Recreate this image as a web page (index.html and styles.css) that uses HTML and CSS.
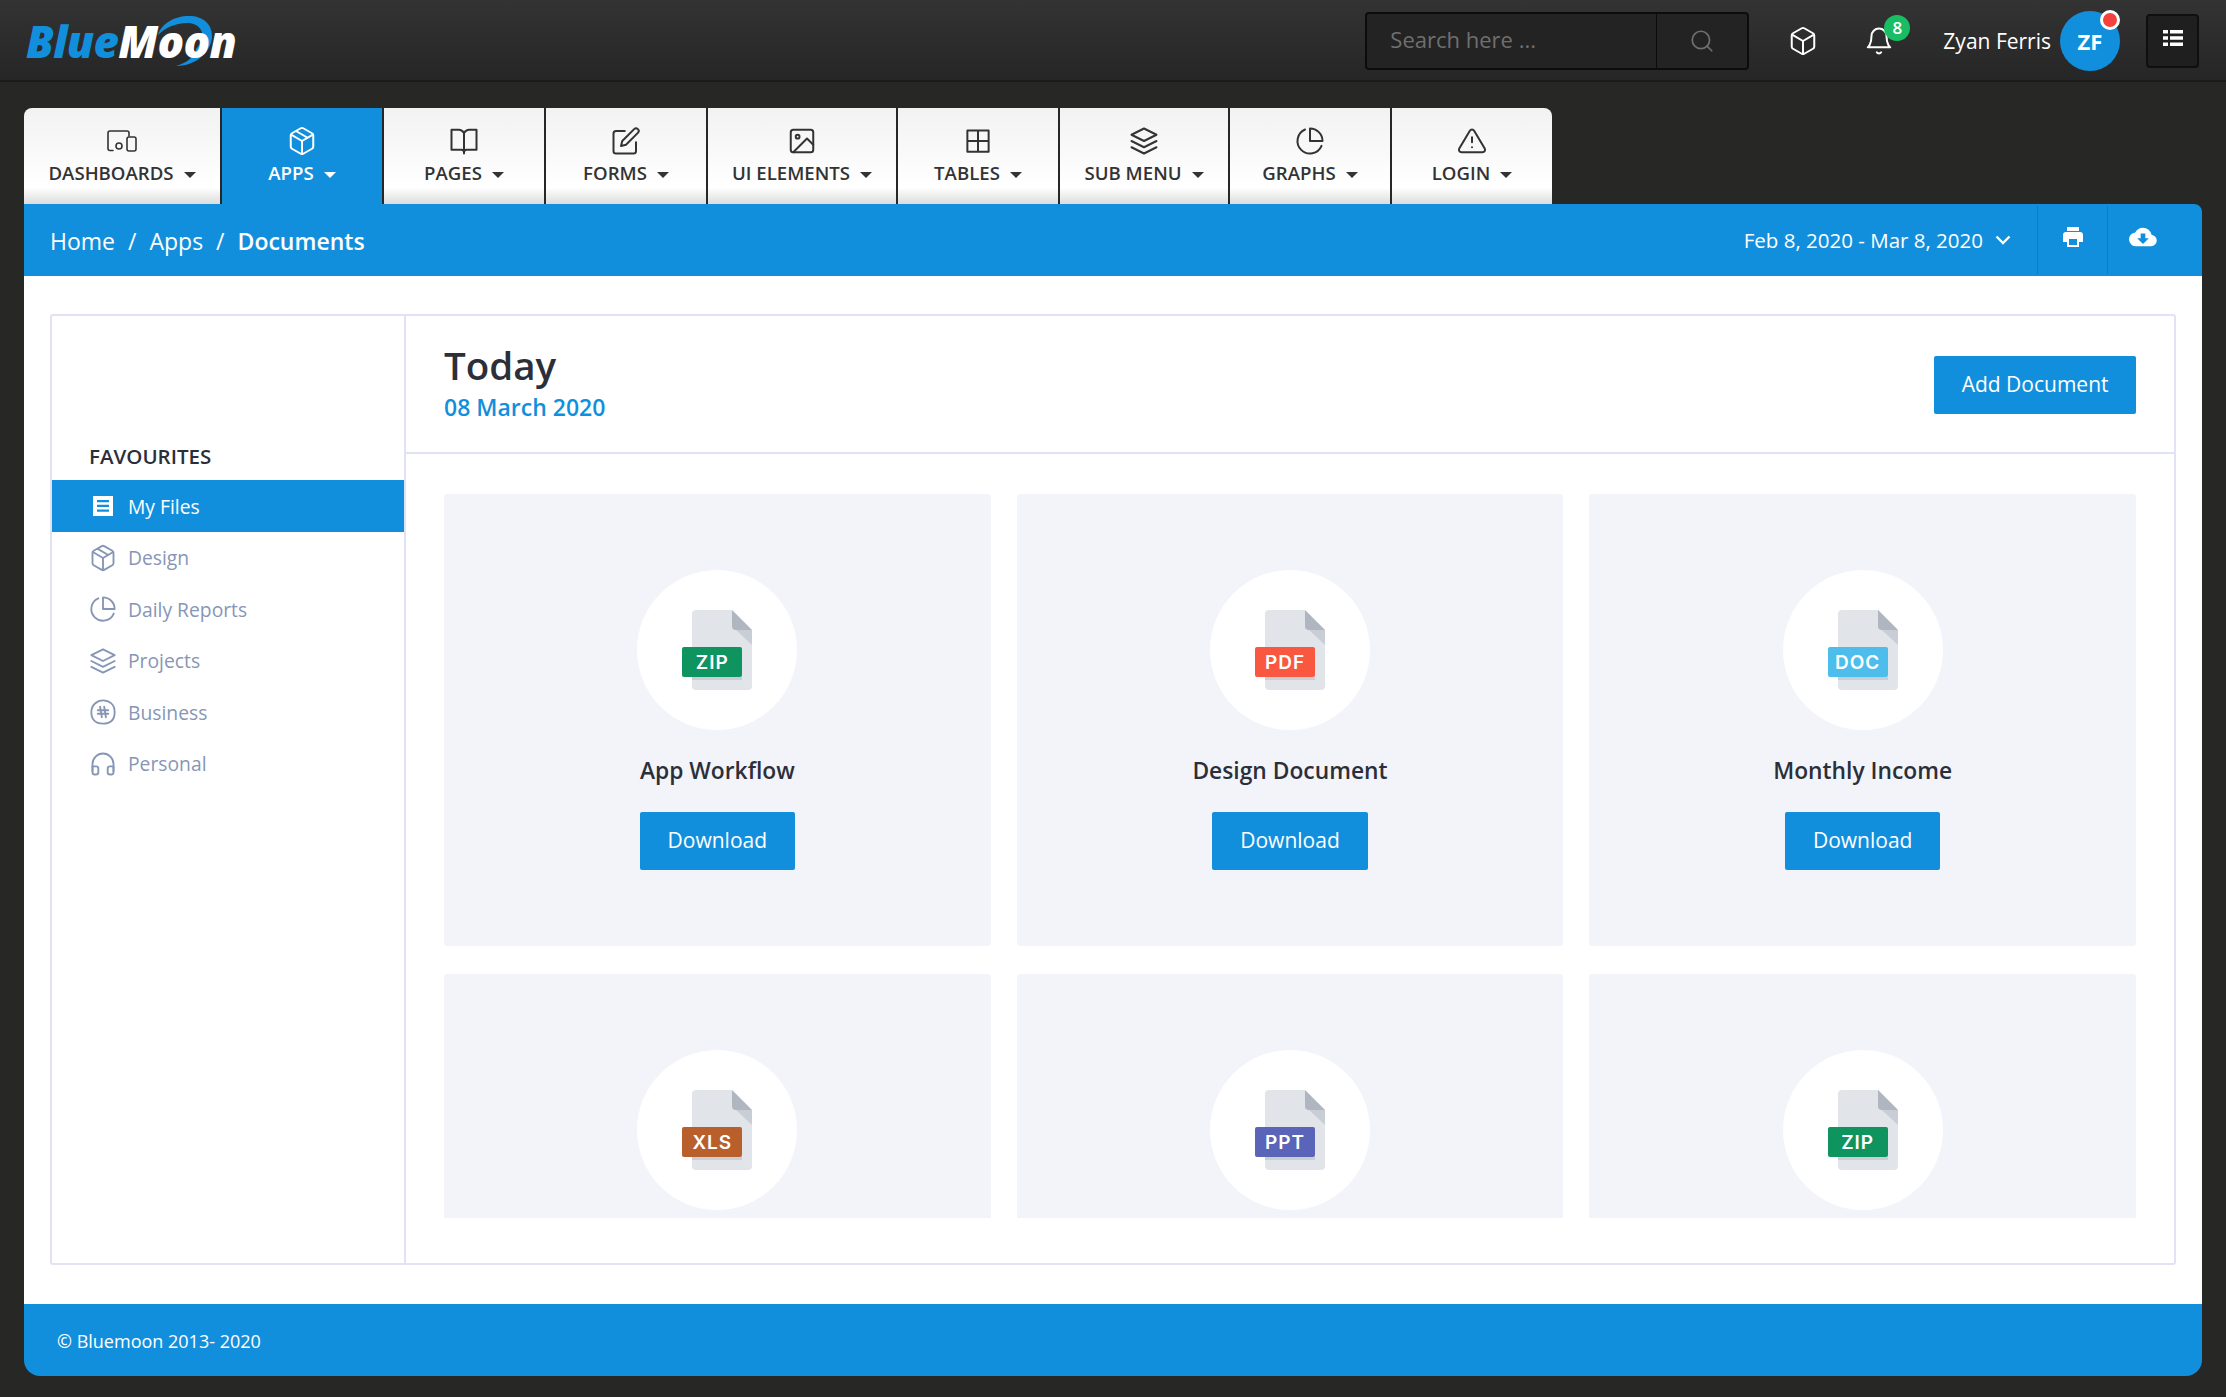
FILE: index.html
```html
<!DOCTYPE html>
<html lang="en">
<head>
    <meta charset="UTF-8">
    <meta name="viewport" content="width=device-width, initial-scale=1.0">
    <title>Documents - BlueMoon</title>
    <link rel="stylesheet" href="styles.css">
</head>
<body>

    <svg class="icon-defs" xmlns="http://www.w3.org/2000/svg">
        <symbol id="i-devices" viewBox="0 0 30 22"><path d="M6 20.500H3a2 2 0 0 1-2-2V3a2 2 0 0 1 2-2h17a2 2 0 0 1 2 2v3"/><rect x="20" y="7" width="9" height="14" rx="2"/><circle cx="12" cy="16" r="3"/></symbol>
        <symbol id="i-box" viewBox="0 0 24 24"><path d="M21 16.500V7.500a2 2 0 0 0-1-1.700l-7-4a2 2 0 0 0-2 0l-7 4a2 2 0 0 0-1 1.700v9a2 2 0 0 0 1 1.700l7 4a2 2 0 0 0 2 0l7-4a2 2 0 0 0 1-1.700z"/><path d="M3.300 6.900 12 12l8.700-5.100M12 22V12M7.500 4.200l9 5.200"/></symbol>
        <symbol id="i-cube" viewBox="0 0 24 24"><path d="M21 16.500V7.500a2 2 0 0 0-1-1.700l-7-4a2 2 0 0 0-2 0l-7 4a2 2 0 0 0-1 1.700v9a2 2 0 0 0 1 1.700l7 4a2 2 0 0 0 2 0l7-4a2 2 0 0 0 1-1.700z"/><path d="M3.300 6.900 12 12l8.700-5.100M12 22V12"/></symbol>
        <symbol id="i-book" viewBox="0 0 24 24"><path d="M12 5.500C11 4 10 3 8 3H2v16h8c1 0 2 .5 2 2 0-1.500 1-2 2-2h8V3h-6c-2 0-3 1-4 2.500zM12 5.500V22"/></symbol>
        <symbol id="i-edit" viewBox="0 0 24 24"><path d="M11 4H4a2 2 0 0 0-2 2v14a2 2 0 0 0 2 2h14a2 2 0 0 0 2-2v-7"/><path d="M18.500 2.500a2.120 2.120 0 0 1 3 3L12 15l-4 1 1-4 9.500-9.500z"/></symbol>
        <symbol id="i-image" viewBox="0 0 24 24"><rect x="3" y="3" width="18" height="18" rx="2"/><circle cx="8.500" cy="8.500" r="1.500"/><path d="M21 15l-5-5L5 21"/></symbol>
        <symbol id="i-grid" viewBox="0 0 24 24"><path d="M3.500 3.500h17v17h-17zM12 3.500v17M3.500 12h17"/></symbol>
        <symbol id="i-layers" viewBox="0 0 24 24"><path d="M12 2 2 7l10 5 10-5-10-5zM2 17l10 5 10-5M2 12l10 5 10-5"/></symbol>
        <symbol id="i-pie" viewBox="0 0 24 24"><path d="M21.210 15.890A10 10 0 1 1 8 2.830"/><path d="M22 12A10 10 0 0 0 12 2v10z"/></symbol>
        <symbol id="i-alert" viewBox="0 0 24 24"><path d="M10.290 3.860 1.820 18a2 2 0 0 0 1.710 3h16.940a2 2 0 0 0 1.710-3L13.710 3.860a2 2 0 0 0-3.420 0zM12 9v4M12 17h.01"/></symbol>
        <symbol id="i-search" viewBox="0 0 24 24"><circle cx="11" cy="11" r="8"/><path d="m21 21-4.350-4.350"/></symbol>
        <symbol id="i-bell" viewBox="0 0 24 24"><path d="M18 8A6 6 0 0 0 6 8c0 7-3 9-3 9h18s-3-2-3-9M13.700 21a2 2 0 0 1-3.460 0"/></symbol>
        <symbol id="i-hash" viewBox="0 0 24 24"><path d="M12 2c5 0 10 3 10 10 0 6-3 10-10 10S2 18 2 12 7 2 12 2z"/><path d="M9.500 7.500l1.500 9M13 7.500l1.500 9M7.500 10.500h9M7.500 13.500h9"/></symbol>
        <symbol id="i-headphones" viewBox="0 0 24 24"><path d="M3 18v-6a9 9 0 0 1 18 0v6"/><path d="M21 19a2 2 0 0 1-2 2h-1a2 2 0 0 1-2-2v-3a2 2 0 0 1 2-2h3zM3 19a2 2 0 0 0 2 2h1a2 2 0 0 0 2-2v-3a2 2 0 0 0-2-2H3z"/></symbol>
        <symbol id="i-doc" viewBox="0 0 60 80">
            <path fill="#e1e4e8" d="M4 0h36l20 20v56a4 4 0 0 1-4 4H4a4 4 0 0 1-4-4V4a4 4 0 0 1 4-4z"/>
            <path fill="#c9ced6" d="M44 20h16v15z"/>
            <path fill="#b0b6bf" d="M40 0l20 20H44a4 4 0 0 1-4-4z"/>
            <path fill="#c9ced6" d="M0 67h50v3H0z"/>
        </symbol>
    </svg>

    <header class="topbar">
        <div class="logo">
            <svg class="logo-moon" viewBox="0 0 54 50"><path d="M0 19C3 8 16 0 31 0c14 0 23 8 23 20 0 14-14 30-36 30 10-3 18-8 20-17 6-7 8-13 5-19-3-5-8-7-13-7C18 7 8 11 0 19z"/></svg>
            <span class="logo-blue">Blue</span><span class="logo-white">Moon</span>
        </div>
        <div class="topbar-right">
            <div class="search">
                <span class="search-text">Search here ...</span>
                <span class="search-btn"><svg class="icon icon-search"><use href="#i-search"/></svg></span>
            </div>
            <svg class="icon top-cube"><use href="#i-cube"/></svg>
            <div class="top-bell">
                <svg class="icon"><use href="#i-bell"/></svg>
                <span class="bell-count">8</span>
            </div>
            <span class="user-name">Zyan Ferris</span>
            <div class="avatar">ZF<span class="avatar-dot"></span></div>
            <div class="list-btn">
                <svg viewBox="0 0 20 16" class="list-icon"><path d="M0 0h5v3.500H0zM7 0h13v3.500H7zM0 6.200h5v3.500H0zM7 6.200h13v3.500H7zM0 12.500h5V16H0zM7 12.500h13V16H7z"/></svg>
            </div>
        </div>
    </header>

    <div class="page">
        <nav class="tabs">
            <a class="tab tab-first"><svg class="icon"><use href="#i-devices"/></svg><span class="tab-label">DASHBOARDS<i class="caret"></i></span></a>
            <a class="tab tab-active"><svg class="icon"><use href="#i-box"/></svg><span class="tab-label">APPS<i class="caret"></i></span></a>
            <a class="tab"><svg class="icon"><use href="#i-book"/></svg><span class="tab-label">PAGES<i class="caret"></i></span></a>
            <a class="tab"><svg class="icon"><use href="#i-edit"/></svg><span class="tab-label">FORMS<i class="caret"></i></span></a>
            <a class="tab tab-w190"><svg class="icon"><use href="#i-image"/></svg><span class="tab-label">UI ELEMENTS<i class="caret"></i></span></a>
            <a class="tab"><svg class="icon"><use href="#i-grid"/></svg><span class="tab-label">TABLES<i class="caret"></i></span></a>
            <a class="tab tab-w170"><svg class="icon"><use href="#i-layers"/></svg><span class="tab-label">SUB MENU<i class="caret"></i></span></a>
            <a class="tab"><svg class="icon"><use href="#i-pie"/></svg><span class="tab-label">GRAPHS<i class="caret"></i></span></a>
            <a class="tab tab-last"><svg class="icon"><use href="#i-alert"/></svg><span class="tab-label">LOGIN<i class="caret"></i></span></a>
        </nav>

        <div class="crumbbar">
            <div class="crumbs">Home<span class="crumb-sep">/</span>Apps<span class="crumb-sep">/</span><b>Documents</b></div>
            <div class="crumb-tools">
                <span class="date-range">Feb 8, 2020 - Mar 8, 2020<svg class="date-chevron" viewBox="0 0 16 10"><path d="M1.500 1.500 8 8l6.500-6.500"/></svg></span>
                <span class="crumb-tool">
                    <svg viewBox="0 0 24 24" class="tool-icon"><path d="M6 2h12v4H6zM19 7H5a3 3 0 0 0-3 3v7h4v5h12v-5h4v-7a3 3 0 0 0-3-3zm-3 13H8v-6h8z"/></svg>
                </span>
                <span class="crumb-tool crumb-tool-last">
                    <svg viewBox="0 0 24 24" class="tool-icon tool-cloud"><path d="M19.350 10.040A7.490 7.490 0 0 0 12 4C9.110 4 6.600 5.640 5.350 8.040A6 6 0 0 0 6 20h13a5 5 0 0 0 .35-9.960zM17 13l-5 5-5-5h3V9h4v4z"/></svg>
                </span>
            </div>
        </div>

        <main class="content">
            <div class="docs-box">
                <aside class="side">
                    <h6 class="side-title">FAVOURITES</h6>
                    <a class="side-item side-active">
                        <svg viewBox="0 0 20 20" class="side-solid"><path fill-rule="evenodd" d="M0 0h20v20H0zM4 4v2.200h12V4zM4 8.700v2.200h12V8.700zM4 13.500v2.200h12v-2.200z"/></svg>
                        My Files
                    </a>
                    <a class="side-item"><svg class="icon"><use href="#i-box"/></svg>Design</a>
                    <a class="side-item"><svg class="icon"><use href="#i-pie"/></svg>Daily Reports</a>
                    <a class="side-item"><svg class="icon"><use href="#i-layers"/></svg>Projects</a>
                    <a class="side-item"><svg class="icon"><use href="#i-hash"/></svg>Business</a>
                    <a class="side-item"><svg class="icon"><use href="#i-headphones"/></svg>Personal</a>
                </aside>

                <section class="docs">
                    <div class="docs-head">
                        <div>
                            <h2 class="docs-title">Today</h2>
                            <div class="docs-date">08 March 2020</div>
                        </div>
                        <a class="btn btn-add">Add Document</a>
                    </div>

                    <div class="docs-grid">
                        <div class="doc-card">
                            <div class="doc-circle"><svg class="doc-file"><use href="#i-doc"/></svg><span class="doc-tag tag-zip">ZIP</span></div>
                            <div class="doc-name">App Workflow</div>
                            <a class="btn">Download</a>
                        </div>
                        <div class="doc-card">
                            <div class="doc-circle"><svg class="doc-file"><use href="#i-doc"/></svg><span class="doc-tag tag-pdf">PDF</span></div>
                            <div class="doc-name">Design Document</div>
                            <a class="btn">Download</a>
                        </div>
                        <div class="doc-card">
                            <div class="doc-circle"><svg class="doc-file"><use href="#i-doc"/></svg><span class="doc-tag tag-doc">DOC</span></div>
                            <div class="doc-name">Monthly Income</div>
                            <a class="btn">Download</a>
                        </div>
                        <div class="doc-card">
                            <div class="doc-circle"><svg class="doc-file"><use href="#i-doc"/></svg><span class="doc-tag tag-xls">XLS</span></div>
                        </div>
                        <div class="doc-card">
                            <div class="doc-circle"><svg class="doc-file"><use href="#i-doc"/></svg><span class="doc-tag tag-ppt">PPT</span></div>
                        </div>
                        <div class="doc-card">
                            <div class="doc-circle"><svg class="doc-file"><use href="#i-doc"/></svg><span class="doc-tag tag-zip">ZIP</span></div>
                        </div>
                    </div>
                </section>
            </div>
        </main>

        <footer class="footer">© Bluemoon 2013- 2020</footer>
    </div>

</body>
</html>
```

FILE: styles.css
```css
* {
    box-sizing: border-box;
}

body {
    font-family: "Open Sans", "Liberation Sans", sans-serif;
    margin: 0;
    min-height: 1397px;
    background-color: #272726;
    color: #2b2f3a;
}

a {
    text-decoration: none;
}

.icon-defs {
    display: none;
}

.icon {
    width: 30px;
    height: 30px;
    fill: none;
    stroke: currentColor;
    stroke-width: 1.6;
    stroke-linecap: round;
    stroke-linejoin: round;
}

/* Top bar */
.topbar {
    height: 82px;
    display: flex;
    align-items: center;
    justify-content: space-between;
    background: linear-gradient(#333333, #262626);
    border-bottom: 2px solid #1b1b1b;
    padding: 2px 27px 0 26px;
}

.logo {
    position: relative;
    font-size: 44px;
    font-weight: 800;
    font-style: italic;
    letter-spacing: -0.7px;
    line-height: 50px;
    width: 208px;
    white-space: nowrap;
}

.logo-moon {
    position: absolute;
    left: 132px;
    top: 0;
    width: 54px;
    height: 50px;
    fill: #128fdc;
}

.logo-blue {
    color: #128fdc;
}

.logo-white {
    position: relative;
    color: #fff;
}

.topbar-right {
    display: flex;
    align-items: center;
}

.search {
    width: 384px;
    height: 58px;
    display: flex;
    background-color: #232323;
    border: 2px solid #0c0c0c;
    border-radius: 4px;
    color: #6f6f6f;
    font-size: 22px;
}

.search-text {
    flex: 1;
    padding-left: 23px;
    line-height: 50px;
}

.search-btn {
    width: 91px;
    border-left: 1px solid #0c0c0c;
    display: flex;
    align-items: center;
    justify-content: center;
}

.icon-search {
    width: 26px;
    height: 26px;
}

.top-cube {
    margin-left: 39px;
    color: #fff;
}

.top-bell {
    position: relative;
    margin-left: 46px;
    height: 30px;
    color: #fff;
}

.bell-count {
    position: absolute;
    left: 20px;
    top: -11px;
    width: 26px;
    height: 26px;
    border-radius: 50%;
    background-color: #19bd63;
    color: #fff;
    font-size: 17px;
    font-weight: 600;
    line-height: 26px;
    text-align: center;
}

.user-name {
    margin-left: 49px;
    color: #fff;
    font-size: 21px;
}

.avatar {
    position: relative;
    width: 60px;
    height: 60px;
    margin-left: 9px;
    border-radius: 50%;
    background-color: #128fdc;
    color: #fff;
    font-size: 22px;
    font-weight: 700;
    line-height: 60px;
    text-align: center;
}

.avatar-dot {
    position: absolute;
    right: 0;
    top: -1px;
    width: 20px;
    height: 20px;
    border-radius: 50%;
    background-color: #f4413c;
    border: 3px solid #fff;
}

.list-btn {
    width: 53px;
    height: 54px;
    margin-left: 26px;
    background-color: #1f1f1f;
    border: 2px solid #0f0f0f;
    border-radius: 4px;
    display: flex;
    align-items: center;
    justify-content: center;
}

.list-icon {
    width: 20px;
    height: 18px;
    margin-bottom: 6px;
    fill: #fff;
}

/* Page frame */
.page {
    margin: 26px 24px 0 24px;
}

.tabs {
    display: flex;
    width: 1528px;
    height: 96px;
    overflow: hidden;
    border-radius: 8px 8px 0 0;
}

.tab {
    width: 162px;
    display: flex;
    flex-direction: column;
    align-items: center;
    padding-top: 18px;
    color: #333;
    background: linear-gradient(#f2f2f2, #ffffff 83%, #dcdcdc);
    border-right: 2px solid #272726;
}

.tab-first {
    width: 198px;
}

.tab-w190 {
    width: 190px;
}

.tab-w170 {
    width: 170px;
}

.tab-last {
    flex: 1;
    border-right: 0;
}

.tab-active {
    background: #128fdc;
    color: #fff;
}

.tab-label {
    display: flex;
    align-items: center;
    margin-top: 3px;
    font-size: 18.6px;
    font-weight: 600;
    line-height: 28px;
}

.caret {
    margin-left: 10px;
    margin-top: 3px;
    border-top: 6px solid currentColor;
    border-left: 6px solid transparent;
    border-right: 6px solid transparent;
}

.crumbbar {
    height: 72px;
    display: flex;
    align-items: center;
    justify-content: space-between;
    padding-left: 26px;
    background-color: #128fdc;
    border-radius: 0 8px 0 0;
    color: #fff;
}

.crumbs {
    padding-top: 2px;
    font-size: 23px;
}

.crumbs b {
    font-weight: 600;
}

.crumb-sep {
    margin: 0 13px;
}

.crumb-tools {
    display: flex;
    align-items: center;
    height: 68px;
}

.date-range {
    display: flex;
    align-items: center;
    font-size: 20.5px;
    margin-right: 26px;
}

.date-chevron {
    width: 16px;
    height: 10px;
    margin-left: 12px;
    fill: none;
    stroke: #fff;
    stroke-width: 2.4;
}

.crumb-tool {
    width: 70px;
    height: 68px;
    display: flex;
    align-items: center;
    justify-content: center;
    border-left: 1px solid #0d7cc2;
}

.crumb-tool-last {
    width: 95px;
    padding-right: 25px;
}

.tool-icon {
    width: 24px;
    height: 24px;
    margin-bottom: 6px;
    fill: #fff;
}

.tool-cloud {
    width: 28px;
    height: 28px;
}

/* Content */
.content {
    background-color: #fff;
    padding: 38px 26px 39px 26px;
}

.docs-box {
    height: 951px;
    display: flex;
    border: 2px solid #e1e3f5;
    border-radius: 3px;
}

.side {
    width: 354px;
    flex-shrink: 0;
    padding-top: 126px;
    border-right: 2px solid #e1e3f5;
}

.side-title {
    margin: 0 0 10px 37px;
    font-size: 20.5px;
    font-weight: 600;
    line-height: 28px;
}

.side-item {
    height: 51.5px;
    display: flex;
    align-items: center;
    padding-left: 37px;
    color: #8796b5;
    font-size: 19.3px;
}

.side-item .icon {
    width: 28px;
    height: 28px;
    margin-right: 11px;
}

.side-active {
    height: 52px;
    padding-left: 41px;
    background-color: #128fdc;
    color: #fff;
}

.side-solid {
    width: 20px;
    height: 20px;
    margin-right: 15px;
    fill: #fff;
}

.docs {
    flex: 1;
    min-width: 0;
}

.docs-head {
    height: 138px;
    display: flex;
    align-items: center;
    justify-content: space-between;
    padding: 0 38px 3px 38px;
    border-bottom: 2px solid #e1e3f5;
}

.docs-title {
    margin: 0 0 3px 0;
    font-size: 38.5px;
    font-weight: 600;
    line-height: 46px;
}

.docs-date {
    color: #128fdc;
    font-size: 23px;
    font-weight: 600;
    line-height: 32px;
}

.btn {
    display: inline-block;
    height: 58px;
    padding: 0 28px;
    background-color: #128fdc;
    border-radius: 2px;
    color: #fff;
    font-size: 21px;
    line-height: 57px;
}

.btn-add {
    margin-top: 5px;
    padding: 0 27.5px;
}

/* second row runs off the bottom of the box, as in the real scroll area */
.docs-grid {
    height: 764px;
    display: grid;
    grid-template-columns: 1fr 1fr 1fr;
    grid-auto-rows: 452px;
    column-gap: 26px;
    row-gap: 28px;
    margin: 0 38px;
    padding-top: 40px;
    overflow: hidden;
}

.doc-card {
    display: flex;
    flex-direction: column;
    align-items: center;
    padding-top: 76px;
    background-color: #f3f4f9;
    border-radius: 3px;
}

.doc-circle {
    position: relative;
    width: 160px;
    height: 160px;
    flex-shrink: 0;
    display: flex;
    align-items: center;
    justify-content: center;
    border-radius: 50%;
    background-color: #fff;
}

.doc-file {
    width: 60px;
    height: 80px;
    margin-left: 10px;
}

.doc-tag {
    position: absolute;
    left: 45px;
    top: 77px;
    width: 60px;
    height: 30px;
    border-radius: 2px;
    color: #fff;
    font-family: Inter, "Open Sans", sans-serif;
    font-size: 19px;
    font-weight: 600;
    letter-spacing: 1px;
    line-height: 32px;
    text-align: center;
}

.tag-zip {
    background-color: #0f9460;
}

.tag-pdf {
    background-color: #f9573f;
}

.tag-doc {
    background-color: #4dbdec;
}

.tag-xls {
    background-color: #b85f2c;
}

.tag-ppt {
    background-color: #5a64b8;
}

.doc-name {
    margin: 26px 0 26px 0;
    font-size: 22.8px;
    font-weight: 600;
    line-height: 30px;
}

.footer {
    height: 72px;
    padding-left: 33px;
    background-color: #128fdc;
    border-radius: 0 0 16px 16px;
    color: #fff;
    font-size: 18px;
    line-height: 74px;
}
```
